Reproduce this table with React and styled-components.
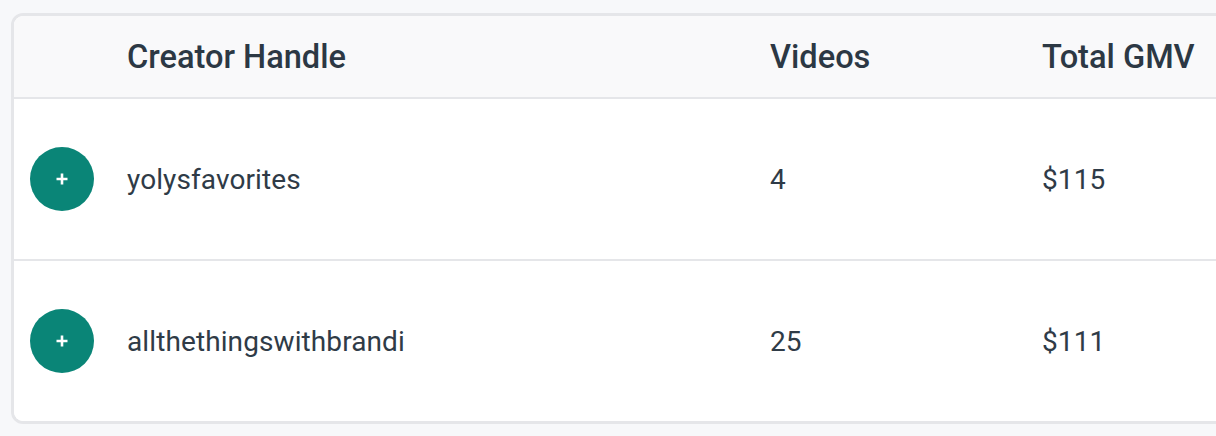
import React from "react";
import styled, { createGlobalStyle } from "styled-components";

const Global = createGlobalStyle`
  html, body { margin: 0; padding: 0; background: #f7f8fa; overflow: hidden; }
  body { font-family: Roboto, "Noto Sans", Arial, sans-serif; }
`;

const Page = styled.div`
  padding: 13px 0 0 11px;
  width: 1400px;
`;

const Card = styled.div`
  width: 1300px;
  background: #ffffff;
  border: 3px solid #e5e6e9;
  border-radius: 12px;
  overflow: hidden;
`;

const Row = styled.div`
  display: grid;
  grid-template-columns: 113px 643px 272px 1fr;
  align-items: center;
  height: ${(p) => (p.$header ? "81px" : "160px")};
  background: ${(p) => (p.$header ? "#f9f9fa" : "#ffffff")};
  border-bottom: ${(p) => (p.$last ? "none" : "2px solid #e5e6e9")};
  color: #2e3a46;
`;

const HeadCell = styled.div`
  font-size: 32.6px;
  font-weight: 500;
  color: #2c3844;
  white-space: nowrap;
`;

const Cell = styled.div`
  font-size: 28px;
  font-weight: 400;
  letter-spacing: 0.1px;
  color: #2f3b47;
  white-space: nowrap;
`;

const ButtonCell = styled.div`
  display: flex;
  padding-left: 16px;
`;

const AddButton = styled.button`
  width: 64px;
  height: 64px;
  border-radius: 50%;
  border: none;
  padding: 0;
  background: #0a8577;
  display: flex;
  align-items: center;
  justify-content: center;
  cursor: pointer;
`;

const Plus = () => (
  <svg width="12" height="12" viewBox="0 0 12 12">
    <path d="M6 0.5V11.5M0.5 6H11.5" stroke="#fff" strokeWidth="2.6" />
  </svg>
);

const rows = [
  { handle: "yolysfavorites", videos: "4", gmv: "$115" },
  { handle: "allthethingswithbrandi", videos: "25", gmv: "$111" },
];

export default function App() {
  return (
    <>
      <Global />
      <Page>
        <Card>
          <Row $header>
            <div />
            <HeadCell>Creator Handle</HeadCell>
            <HeadCell>Videos</HeadCell>
            <HeadCell>Total GMV</HeadCell>
          </Row>
          {rows.map((r, i) => (
            <Row key={r.handle} $last={i === rows.length - 1}>
              <ButtonCell>
                <AddButton aria-label="add">
                  <Plus />
                </AddButton>
              </ButtonCell>
              <Cell>{r.handle}</Cell>
              <Cell>{r.videos}</Cell>
              <Cell>{r.gmv}</Cell>
            </Row>
          ))}
        </Card>
      </Page>
    </>
  );
}
